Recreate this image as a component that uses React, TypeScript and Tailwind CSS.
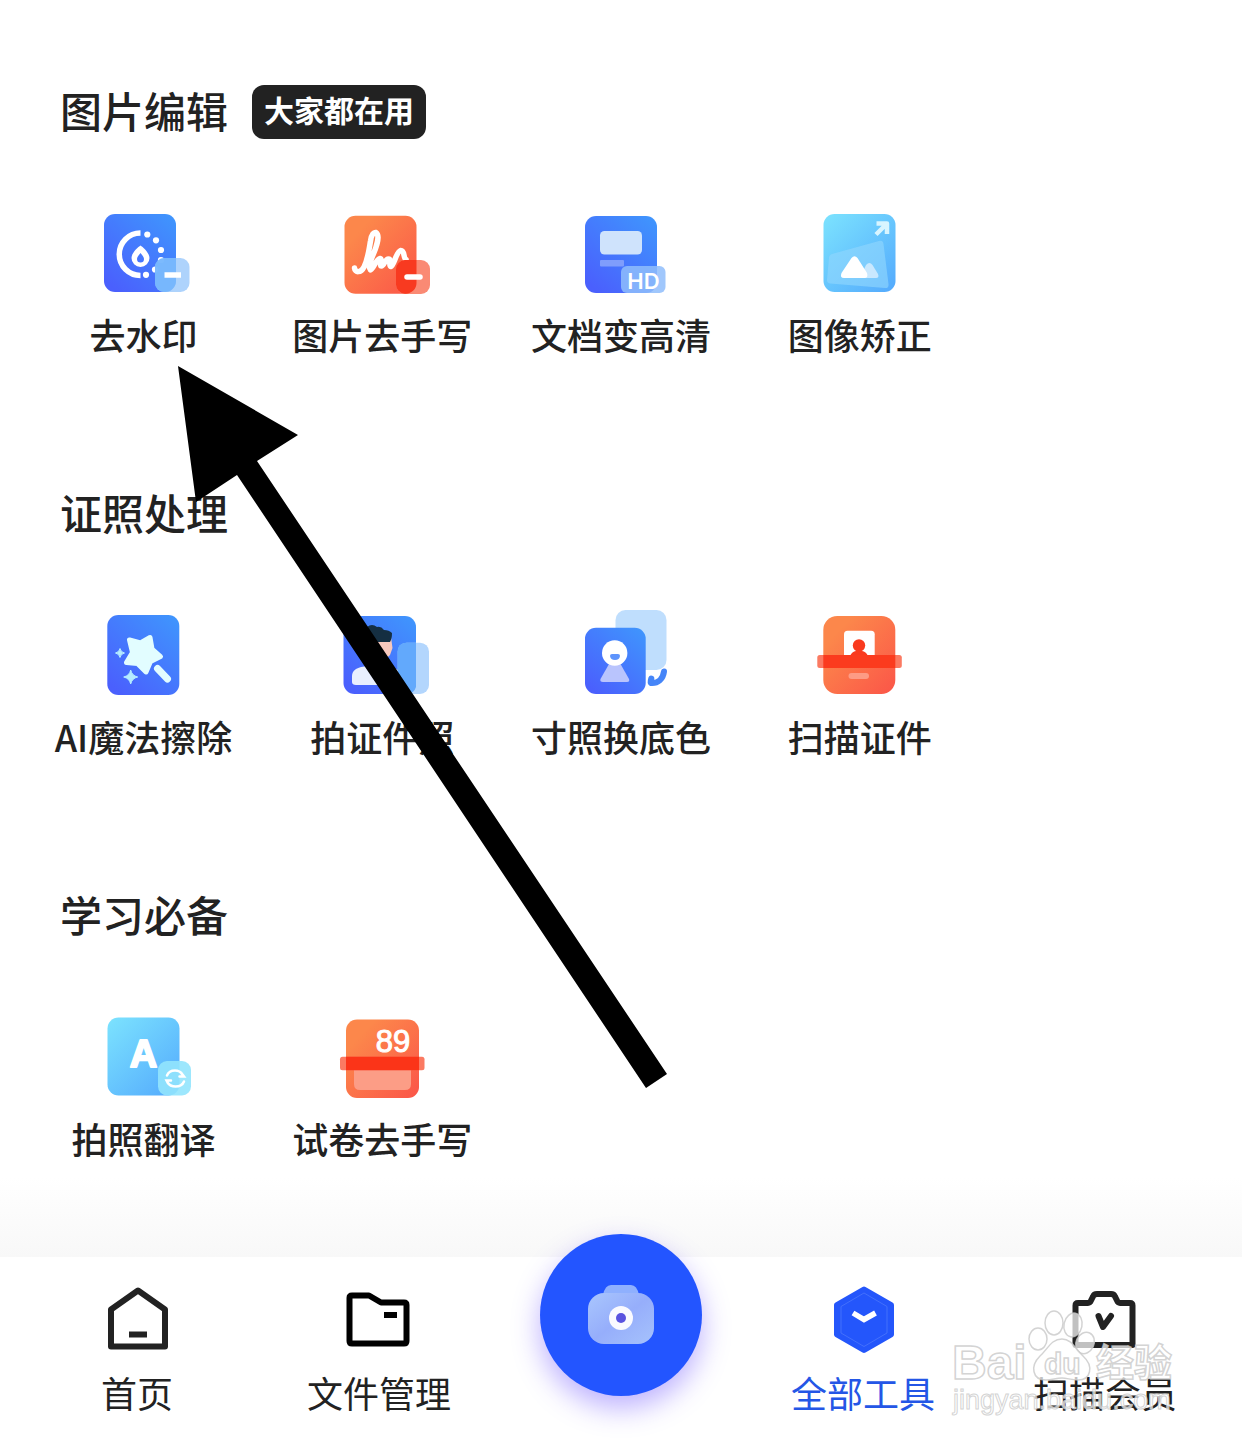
import type { ReactNode } from "react";

function Defs() {
  return (
    <svg className="absolute size-0" aria-hidden="true">
      <defs>
        <linearGradient id="blue" x1="1" y1="0" x2="0.2" y2="1">
          <stop offset="0" stopColor="#3f97fd" />
          <stop offset="1" stopColor="#4a60fd" />
        </linearGradient>
        <linearGradient id="orange" x1="0.2" y1="0.2" x2="1" y2="1">
          <stop offset="0" stopColor="#fc874b" />
          <stop offset="1" stopColor="#fb5548" />
        </linearGradient>
        <linearGradient id="cyan" x1="0" y1="0" x2="0.9" y2="1">
          <stop offset="0" stopColor="#7ce3fe" />
          <stop offset="1" stopColor="#55acfd" />
        </linearGradient>
        <linearGradient id="lens" x1="0" y1="0" x2="1" y2="1">
          <stop offset="0" stopColor="#a9c6fd" />
          <stop offset="0.5" stopColor="#96aefb" />
          <stop offset="1" stopColor="#a6c2fc" />
        </linearGradient>
      </defs>
    </svg>
  );
}

function Icon({ children }: { children: ReactNode }) {
  return (
    <svg viewBox="0 0 100 96" className="h-24 w-25 shrink-0" fill="none" aria-hidden="true">
      {children}
    </svg>
  );
}

const WatermarkIcon = () => (
  <Icon>
    <rect x="11" y="9" width="72" height="78" rx="11" fill="url(#blue)" />
    <path d="M47.5 28A21 21 0 0 0 47.5 70.500" stroke="#fff" strokeWidth="5.500" />
    <g fill="#fff">
      <circle cx="54.300" cy="29.500" r="3.100" />
      <circle cx="63" cy="35.300" r="3.100" />
      <circle cx="68" cy="45" r="3.100" />
      <circle cx="68" cy="55" r="3.100" />
      <circle cx="62" cy="64.500" r="3.100" />
      <circle cx="53" cy="69.800" r="3.100" />
      <path
        fillRule="evenodd"
        d="M47.500 40.500C50 42 56.500 48 56.500 53A9 9 0 0 1 38.500 53C38.500 48 45 42 47.500 40.500ZM47.500 48C46 50 44 52 44 54A3.500 3.500 0 0 0 51 54C51 52 49 50 47.500 48Z"
      />
    </g>
    <rect x="62" y="53" width="34.500" height="34" rx="9" fill="#a3cdfc" fillOpacity="0.88" />
    <path d="M62 62a9 9 0 0 1 9-9h12v23a11 11 0 0 1-11 11h-1a9 9 0 0 1-9-9Z" fill="#6fb4fc" fillOpacity="0.8" />
    <path d="M71.500 70H88" stroke="#fff" strokeWidth="5.500" />
  </Icon>
);

const HandwritingIcon = () => (
  <Icon>
    <rect x="12.500" y="10.700" width="72" height="78" rx="11" fill="url(#orange)" />
    <path
      d="M22.500 63C23 68 29 68 32 62C36 54 37 45 38.500 36C39.500 29 42 27 44 27.500C48 30 45 41 41 50C38 57 36 62 38.500 65C41 65 44 54 48 53.500C51 54 47 61 49.500 61C52 61 53 54 56.500 54C60 54 56 61 59 61.500C62 61 64 47 68.500 45.500C73 45 71 53 74 54.500"
      stroke="#fff"
      strokeWidth="5.500"
      strokeLinecap="round"
      strokeLinejoin="round"
    />
    <rect x="64" y="55" width="34" height="34" rx="9" fill="#fa8a74" />
    <path d="M64 64a9 9 0 0 1 9-9h11.500v23a10.700 10.700 0 0 1-10.700 10.700h-.8a9 9 0 0 1-9-9Z" fill="#f83a20" />
    <path d="M75 72H88" stroke="#fff" strokeWidth="5.500" strokeLinecap="round" />
  </Icon>
);

const DocumentHdIcon = () => (
  <Icon>
    <rect x="14" y="11" width="72" height="77" rx="11" fill="url(#blue)" />
    <rect x="29" y="26" width="42" height="23.500" rx="4.500" fill="#cfe3fc" />
    <rect x="29" y="55" width="24" height="6.500" rx="1" fill="#7f9dfc" />
    <rect x="50" y="61" width="44.500" height="27" rx="6" fill="#8fbdfc" fillOpacity="0.85" />
    <text x="72.500" y="84" textAnchor="middle" fill="#fff" className="font-['Inter'] text-[22px] font-semibold">HD</text>
  </Icon>
);

const CorrectionIcon = () => (
  <Icon>
    <rect x="13.500" y="9" width="72" height="78" rx="11" fill="url(#cyan)" />
    <path d="M66.500 18.500H77V29M77 18.500L66 29.500" stroke="#d8f5ff" strokeWidth="4.500" strokeLinejoin="round" />
    <path d="M19 53Q19 50 22 49L69 36Q73 35 73.500 39L78.500 79Q79 83.500 75 83L20 78.500Q17 78 17 75Z" fill="#8fd6fd" fillOpacity="0.65" />
    <path d="M56 60Q59.500 56 62.500 60L68 69Q69.500 73 66 73H50Z" fill="#c9e8fe" />
    <path d="M41.500 53Q44.500 49.500 47.500 53L57 68Q58.500 73 54.500 73H34Q29.500 73 31.500 68Z" fill="#fff" />
  </Icon>
);

const MagicEraserIcon = () => (
  <Icon>
    <rect x="14.300" y="8" width="72" height="80" rx="11" fill="url(#blue)" />
    <g fill="#e2fdff" stroke="#e2fdff" strokeLinejoin="round">
      <path d="M36.500 33L47.500 36L57 30.500L59 42L67.500 49.500L57.500 54.500L53 65L44.500 56.500L33.500 55.500L39.500 45.500Z" strokeWidth="5" />
      <path d="M64.500 61.500L74.500 72" strokeWidth="7" strokeLinecap="round" />
    </g>
    <path d="M27 41.500Q27.800 45.200 31.500 46Q27.800 46.800 27 50.500Q26.200 46.800 22.500 46Q26.200 45.200 27 41.500Z" fill="#b5ecff" stroke="#b5ecff" />
    <path d="M37.700 63Q39 68.700 44.700 70Q39 71.300 37.700 77Q36.400 71.300 30.700 70Q36.400 68.700 37.700 63Z" fill="#b5ecff" stroke="#b5ecff" />
  </Icon>
);

const IdPhotoIcon = () => (
  <Icon>
    <rect x="11.500" y="9" width="72.500" height="78" rx="11" fill="url(#blue)" />
    <path d="M32 30H59L60.500 41L58 48Q54 53 50 51V60H36Z" fill="#f7c8bd" />
    <path d="M30 38Q27 25 35 20Q40 16 45 20Q49 19 52 23Q57 23 60 26Q60 32 58 35L44 35L40 40Z" fill="#152f42" />
    <path d="M20 69Q20 60 36 59H52Q68 60 70 70V74Q70 78 66 78H24Q20 78 20 75Z" fill="#e9effe" />
    <rect x="65.700" y="35.700" width="31.300" height="51.300" rx="9" fill="#b3d6fd" />
    <path d="M65.700 43a8 8 0 0 1 8-7.300H84V80q-2 7-10 7a8 8 0 0 1-8.300-8Z" fill="#62a9fc" />
  </Icon>
);

const BackgroundSwapIcon = () => (
  <Icon>
    <rect x="44.500" y="3" width="51" height="60" rx="10" fill="#bfdefd" />
    <rect x="14" y="20.700" width="60.700" height="66.300" rx="11" fill="url(#blue)" />
    <path d="M38 57H49.500L58 72Q59 75 56 75H32Q28.500 75 29.500 72Z" fill="#b9c4fd" />
    <circle cx="43.700" cy="46" r="12.700" fill="#fff" />
    <path d="M39 49Q39 47 41 47H47Q49 47 49 49Q48.500 53 44 53Q39.500 53 39 49Z" fill="#5e94fc" />
    <path d="M80.300 71.500Q79 75.500 80 76C87 76.500 92 72 93 64.500" stroke="#4585f8" strokeWidth="6" strokeLinecap="round" strokeLinejoin="round" />
  </Icon>
);

const ScanIdIcon = () => (
  <Icon>
    <rect x="13.300" y="9" width="72" height="78" rx="14" fill="url(#orange)" />
    <rect x="34" y="23.700" width="30.700" height="30" rx="3.500" fill="#fff" />
    <circle cx="49" cy="38.500" r="6.200" fill="#f93a1e" />
    <path d="M40 49Q42 44.500 46 44H52Q56 44.500 58 49Z" fill="#f93a1e" />
    <rect x="7.300" y="48" width="84.500" height="13" rx="2.500" fill="#fb7a62" />
    <rect x="13.300" y="48" width="72" height="13" fill="#fb3b1e" />
    <rect x="38.500" y="66" width="20.500" height="6" rx="3" fill="#fd9b85" />
  </Icon>
);

const TranslateIcon = () => (
  <Icon>
    <rect x="14.500" y="8.500" width="72" height="78" rx="11" fill="url(#cyan)" />
    <text x="50.500" y="58" textAnchor="middle" fill="#fff" stroke="#fff" strokeWidth="2" strokeLinejoin="round" className="font-['Liberation_Sans'] text-[38px] font-bold">A</text>
    <rect x="65" y="52" width="33" height="34.500" rx="9" fill="#92e4fd" fillOpacity="0.9" />
    <g stroke="#fff" strokeWidth="2.500" strokeLinecap="round">
      <path d="M74 66.500Q76 61.500 82 61.500Q87 61.500 89.500 65.500L91 67.500H86.500" />
      <path d="M91 72.500Q89 77.500 82.500 77.500Q77 77.500 74.500 73.500L73.500 71.500H78" />
    </g>
  </Icon>
);

const ExamPaperIcon = () => (
  <Icon>
    <rect x="14" y="10.500" width="73" height="78.500" rx="11" fill="url(#orange)" />
    <text x="61" y="43" textAnchor="middle" fill="#fff" stroke="#fff" className="font-['Liberation_Sans'] text-[31px]">89</text>
    <path d="M22 61H79V75Q79 81 73 81H28Q22 81 22 75Z" fill="#fc9d86" />
    <rect x="8" y="47.700" width="84.500" height="13.500" rx="2.500" fill="#fb7a62" />
    <rect x="14" y="47.700" width="73" height="13.500" fill="#fb3418" />
  </Icon>
);

type Tool = { label: string; icon: ReactNode };

const sections: { title: string; badge?: string; tools: Tool[] }[] = [
  {
    title: "图片编辑",
    badge: "大家都在用",
    tools: [
      { label: "去水印", icon: <WatermarkIcon /> },
      { label: "图片去手写", icon: <HandwritingIcon /> },
      { label: "文档变高清", icon: <DocumentHdIcon /> },
      { label: "图像矫正", icon: <CorrectionIcon /> },
    ],
  },
  {
    title: "证照处理",
    tools: [
      { label: "AI魔法擦除", icon: <MagicEraserIcon /> },
      { label: "拍证件照", icon: <IdPhotoIcon /> },
      { label: "寸照换底色", icon: <BackgroundSwapIcon /> },
      { label: "扫描证件", icon: <ScanIdIcon /> },
    ],
  },
  {
    title: "学习必备",
    tools: [
      { label: "拍照翻译", icon: <TranslateIcon /> },
      { label: "试卷去手写", icon: <ExamPaperIcon /> },
    ],
  },
];

function NavItem({ label, active, children }: { label: string; active?: boolean; children: ReactNode }) {
  return (
    <a
      href="#"
      aria-current={active ? "page" : undefined}
      className={`flex flex-col items-center gap-3.5 ${active ? "text-[#2456e6]" : "text-[#222]"}`}
    >
      <svg viewBox="0 0 72 72" className="size-18" fill="none" aria-hidden="true">
        {children}
      </svg>
      <span className="text-[36px] leading-[42px] whitespace-nowrap">{label}</span>
    </a>
  );
}

function PointerArrow() {
  return (
    <svg viewBox="0 0 489 722" className="pointer-events-none absolute top-[366px] left-[178px] h-[722px] w-[489px]" aria-hidden="true">
      <path d="M0 0L120 69L79 95L489 708L468 722L59 109L18 136Z" fill="#000" />
    </svg>
  );
}

function BaiduMark() {
  return (
    <svg viewBox="0 0 236 120" className="pointer-events-none absolute right-14 bottom-5 h-[120px] w-[236px]" aria-hidden="true">
      <g fill="#fff" fillOpacity="0.72" stroke="#c8c8c8" strokeOpacity="0.8" strokeWidth="1.500">
        <ellipse cx="88" cy="35" rx="9" ry="11" />
        <ellipse cx="104" cy="19" rx="9" ry="12" />
        <ellipse cx="123" cy="21" rx="9" ry="12" transform="rotate(12 123 21)" />
        <ellipse cx="135" cy="39" rx="9" ry="11" transform="rotate(25 135 39)" />
        <path d="M112 35C122 35 125 45 133 52C144 62 141 76 128 76C121 76 117 74 112 74C106 74 102 76 96 76C82 76 80 62 90 52C98 45 101 35 112 35Z" />
        <text x="2" y="75" className="font-['Liberation_Sans'] text-[48px] font-bold">Bai</text>
        <text x="94" y="70" className="font-['Liberation_Sans'] text-[30px] font-bold">du</text>
        <text x="146" y="72" className="font-['Noto_Sans_CJK_SC'] text-[38px] font-bold">经验</text>
        <text x="3" y="105" strokeWidth="1" className="font-['Liberation_Sans'] text-[27px]">jingyan.baidu.com</text>
      </g>
    </svg>
  );
}

export default function App() {
  return (
    <div className="relative flex min-h-screen flex-col overflow-x-hidden bg-white font-['Noto_Sans_CJK_SC',sans-serif] text-[#222]">
      <Defs />
      <main className="flex flex-col gap-[132px] pt-[85px]">
        {sections.map((section) => (
          <section key={section.title}>
            <header className="flex h-14 items-start gap-6 pl-15">
              <h2 className="text-[42px] leading-[50px] font-medium">{section.title}</h2>
              {section.badge && (
                <span className="rounded-xl bg-[#222] px-3 pt-[3px] pb-[9px] text-[30px] leading-[42px] font-bold text-white">{section.badge}</span>
              )}
            </header>
            <div className="mt-16 grid grid-cols-5 px-6">
              {section.tools.map((tool) => (
                <button key={tool.label} type="button" className="flex flex-col items-center gap-3">
                  {tool.icon}
                  <span className="text-[36px] leading-[42px] font-medium whitespace-nowrap">{tool.label}</span>
                </button>
              ))}
            </div>
          </section>
        ))}
      </main>

      <div className="mt-auto h-20 bg-linear-to-b from-white to-[#f8f8f8]" />
      <nav className="grid grid-cols-5 bg-white px-4 pt-7 pb-[31px]">
        <NavItem label="首页">
          <g stroke="currentColor" strokeWidth="6" strokeLinejoin="round">
            <path d="M37 5.500L64 24.500V61.500H10V24.500Z" />
            <path d="M28 49.500H46" />
          </g>
        </NavItem>
        <NavItem label="文件管理">
          <g stroke="#000" strokeWidth="6" strokeLinejoin="round">
            <path d="M9 10.500H26L38 17.500H61Q63.500 17.500 63.500 20V56Q63.500 58.500 61 58.500H9Q6.500 58.500 6.500 56V13Q6.500 10.500 9 10.500Z" />
            <path d="M41 30H54" />
          </g>
        </NavItem>
        <div className="relative flex justify-center">
          <button
            type="button"
            aria-label="拍照扫描"
            className="absolute -top-[51px] flex size-[162px] items-center justify-center rounded-full bg-[#2355ff] shadow-[0_12px_28px_rgba(90,60,255,0.4)]"
          >
            <svg viewBox="0 0 66 60" className="h-15 w-[66px]" aria-hidden="true">
              <path d="M15 10Q17 0 23 0H43Q49 0 51 10Z" fill="#8fb0fe" />
              <rect y="8" width="66" height="51" rx="16" fill="url(#lens)" />
              <circle cx="33" cy="33" r="12" fill="#fafaff" />
              <circle cx="33" cy="33" r="5" fill="#5a53df" />
            </svg>
          </button>
        </div>
        <NavItem label="全部工具" active>
          <path d="M37 4.500L64 20V49.500L37 65L10 49.500V20Z" fill="#2456fb" stroke="#2456fb" strokeWidth="6" strokeLinejoin="round" />
          <path d="M37 8L60 21.500V48L37 61.500L14 48V21.500Z" stroke="#4370fb" strokeWidth="1" strokeLinejoin="round" />
          <path d="M26 28L37 34.500L48.500 28" stroke="#fff" strokeWidth="5.500" />
        </NavItem>
        <NavItem label="扫描会员">
          <g stroke="currentColor" strokeWidth="6" strokeLinejoin="round" strokeLinecap="round">
            <path d="M9 18H19Q21 18 22 15.500L24 11.500Q25 9 28 9H42Q45 9 46 11.500L48 15.500Q49 18 51 18H61Q63.500 18 63.500 20.500V60H6.500V20.500Q6.500 18 9 18Z" />
            <path d="M29.500 31L34 42L42 31" />
          </g>
        </NavItem>
      </nav>
      <PointerArrow />
      <BaiduMark />
    </div>
  );
}
